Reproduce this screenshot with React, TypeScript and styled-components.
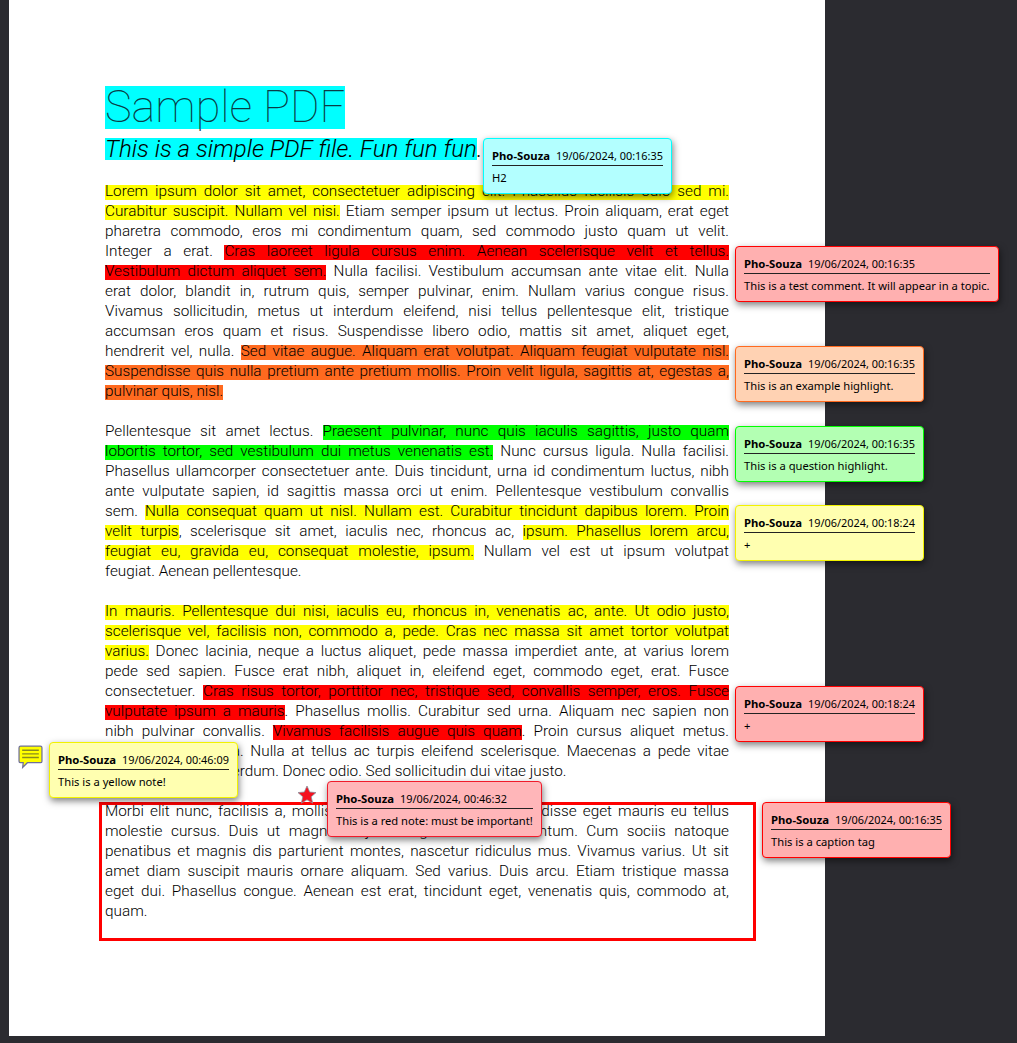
import React, { FC, ReactNode } from 'react';
import styled, { createGlobalStyle } from 'styled-components';

type Tone = 'cyan' | 'red' | 'pink' | 'orange' | 'green' | 'yellow';
type Mark = 'yellow' | 'red' | 'orange' | 'green';

const toneColors: Record<Tone, { bg: string; border: string }> = {
  cyan: { bg: '#b3ffff', border: '#00ffff' },
  red: { bg: '#ffb0b0', border: '#ff0000' },
  pink: { bg: '#ffb6b9', border: '#f01b2b' },
  orange: { bg: '#ffd2b3', border: '#ff6a1f' },
  green: { bg: '#b3ffb3', border: '#00ff00' },
  yellow: { bg: '#ffffb0', border: '#f2f200' },
};

const markColors: Record<Mark, string> = {
  yellow: '#ffff00',
  red: '#ff0000',
  orange: '#ff6a1f',
  green: '#00ff00',
};

const comments: { x: number; y: number; tone: Tone; date: string; text: string }[] = [
  { x: 483, y: 138, tone: 'cyan', date: '19/06/2024, 00:16:35', text: 'H2' },
  { x: 735, y: 246, tone: 'red', date: '19/06/2024, 00:16:35', text: 'This is a test comment. It will appear in a topic.' },
  { x: 735, y: 346, tone: 'orange', date: '19/06/2024, 00:16:35', text: 'This is an example highlight.' },
  { x: 735, y: 426, tone: 'green', date: '19/06/2024, 00:16:35', text: 'This is a question highlight.' },
  { x: 735, y: 505, tone: 'yellow', date: '19/06/2024, 00:18:24', text: '+' },
  { x: 735, y: 686, tone: 'red', date: '19/06/2024, 00:18:24', text: '+' },
  { x: 49, y: 742, tone: 'yellow', date: '19/06/2024, 00:46:09', text: 'This is a yellow note!' },
  { x: 327, y: 781, tone: 'pink', date: '19/06/2024, 00:46:32', text: 'This is a red note: must be important!' },
  { x: 762, y: 802, tone: 'red', date: '19/06/2024, 00:16:35', text: 'This is a caption tag' },
];

const App: FC = () => (
  <>
    <GlobalStyle />
    <Viewer>
      <Sheet>
        <Title>Sample PDF</Title>
        <Subtitle>
          <SubtitleMark>This is a simple PDF file. Fun fun fun</SubtitleMark>.
        </Subtitle>

        <Paragraph>
          <Row>
            <M c="yellow">Lorem ipsum dolor sit amet, consectetuer adipiscing elit. Phasellus facilisis odio sed mi.</M>
          </Row>
          <Row>
            <M c="yellow">Curabitur suscipit. Nullam vel nisi.</M> Etiam semper ipsum ut lectus. Proin aliquam, erat eget
          </Row>
          <Row>pharetra commodo, eros mi condimentum quam, sed commodo justo quam ut velit.</Row>
          <Row>
            Integer a erat. <M c="red">Cras laoreet ligula cursus enim. Aenean scelerisque velit et tellus.</M>
          </Row>
          <Row>
            <M c="red">Vestibulum dictum aliquet sem.</M> Nulla facilisi. Vestibulum accumsan ante vitae elit. Nulla
          </Row>
          <Row>erat dolor, blandit in, rutrum quis, semper pulvinar, enim. Nullam varius congue risus.</Row>
          <Row>Vivamus sollicitudin, metus ut interdum eleifend, nisi tellus pellentesque elit, tristique</Row>
          <Row>accumsan eros quam et risus. Suspendisse libero odio, mattis sit amet, aliquet eget,</Row>
          <Row>
            hendrerit vel, nulla. <M c="orange">Sed vitae augue. Aliquam erat volutpat. Aliquam feugiat vulputate nisl.</M>
          </Row>
          <Row>
            <M c="orange">Suspendisse quis nulla pretium ante pretium mollis. Proin velit ligula, sagittis at, egestas a,</M>
          </Row>
          <LastRow>
            <M c="orange">pulvinar quis, nisl.</M>
          </LastRow>
        </Paragraph>

        <Paragraph>
          <Row>
            Pellentesque sit amet lectus. <M c="green">Praesent pulvinar, nunc quis iaculis sagittis, justo quam</M>
          </Row>
          <Row>
            <M c="green">lobortis tortor, sed vestibulum dui metus venenatis est.</M> Nunc cursus ligula. Nulla facilisi.
          </Row>
          <Row>Phasellus ullamcorper consectetuer ante. Duis tincidunt, urna id condimentum luctus, nibh</Row>
          <Row>ante vulputate sapien, id sagittis massa orci ut enim. Pellentesque vestibulum convallis</Row>
          <Row>
            sem. <M c="yellow">Nulla consequat quam ut nisl. Nullam est. Curabitur tincidunt dapibus lorem. Proin</M>
          </Row>
          <Row>
            <M c="yellow">velit turpis</M>, scelerisque sit amet, iaculis nec, rhoncus ac, <M c="yellow">ipsum. Phasellus lorem arcu,</M>
          </Row>
          <Row>
            <M c="yellow">feugiat eu, gravida eu, consequat molestie, ipsum.</M> Nullam vel est ut ipsum volutpat
          </Row>
          <LastRow>feugiat. Aenean pellentesque.</LastRow>
        </Paragraph>

        <Paragraph>
          <Row>
            <M c="yellow">In mauris. Pellentesque dui nisi, iaculis eu, rhoncus in, venenatis ac, ante. Ut odio justo,</M>
          </Row>
          <Row>
            <M c="yellow">scelerisque vel, facilisis non, commodo a, pede. Cras nec massa sit amet tortor volutpat</M>
          </Row>
          <Row>
            <M c="yellow">varius.</M> Donec lacinia, neque a luctus aliquet, pede massa imperdiet ante, at varius lorem
          </Row>
          <Row>pede sed sapien. Fusce erat nibh, aliquet in, eleifend eget, commodo eget, erat. Fusce</Row>
          <Row>
            consectetuer. <M c="red">Cras risus tortor, porttitor nec, tristique sed, convallis semper, eros. Fusce</M>
          </Row>
          <Row>
            <M c="red">vulputate ipsum a mauris</M>. Phasellus mollis. Curabitur sed urna. Aliquam nec sapien non
          </Row>
          <Row>
            nibh pulvinar convallis. <M c="red">Vivamus facilisis augue quis quam</M>. Proin cursus aliquet metus.
          </Row>
          <Row>Suspendisse lacinia. Nulla at tellus ac turpis eleifend scelerisque. Maecenas a pede vitae</Row>
          <LastRow>enim commodo interdum. Donec odio. Sed sollicitudin dui vitae justo.</LastRow>
        </Paragraph>

        <CaptionParagraph>
          <Row>Morbi elit nunc, facilisis a, mollis a, molestie at, lectus. Suspendisse eget mauris eu tellus</Row>
          <Row>molestie cursus. Duis ut magna at justo dignissim condimentum. Cum sociis natoque</Row>
          <Row>penatibus et magnis dis parturient montes, nascetur ridiculus mus. Vivamus varius. Ut sit</Row>
          <Row>amet diam suscipit mauris ornare aliquam. Sed varius. Duis arcu. Etiam tristique massa</Row>
          <Row>eget dui. Phasellus congue. Aenean est erat, tincidunt eget, venenatis quis, commodo at,</Row>
          <LastRow>quam.</LastRow>
          <CaptionBox />
        </CaptionParagraph>
      </Sheet>

      <NoteIcon viewBox="0 0 24 23">
        <path
          d="M2.500 1h19a1.500 1.500 0 0 1 1.500 1.500v13a1.500 1.500 0 0 1-1.500 1.500H9l-4.500 4.500.5-4.500H2.500A1.500 1.500 0 0 1 1 15.500v-13A1.500 1.500 0 0 1 2.500 1z"
          fill="#ffff00"
          stroke="#6f6f9a"
          strokeWidth="1.200"
        />
        <path d="M4 5h16M4 8.500h16M4 12h16" stroke="#8a8a1e" strokeWidth="1.300" />
      </NoteIcon>
      <StarIcon viewBox="0 0 20 20">
        <path
          d="M10 1l2.700 6 6.300.6-4.800 4.200 1.500 6.400L10 14.800l-5.700 3.400 1.500-6.400L1 7.600 7.300 7z"
          fill="#f5111f"
          stroke="#8a8f9a"
          strokeWidth="0.800"
        />
      </StarIcon>

      {comments.map((c, i) => (
        <Comment key={i} $x={c.x} $y={c.y} $tone={c.tone}>
          <CommentHead>
            <Author>Pho-Souza</Author>
            <span>{c.date}</span>
          </CommentHead>
          <CommentBody>{c.text}</CommentBody>
        </Comment>
      ))}
    </Viewer>
  </>
);

export default App;

const M: FC<{ c: Mark; children: ReactNode }> = ({ c, children }) => <Hl $bg={markColors[c]}>{children}</Hl>;

const GlobalStyle = createGlobalStyle`
  html, body {
    margin: 0;
    padding: 0;
    background: #2b2b30;
  }
`;

const Viewer = styled.div`
  position: relative;
  width: 1017px;
  height: 1043px;
  overflow: hidden;
  background: #2b2b30;
  padding-left: 9px;
  box-sizing: border-box;
`;

const Sheet = styled.main`
  width: 816px;
  height: 1036px;
  box-sizing: border-box;
  padding: 86px 96px 0;
  background: #fff;
  color: #000;
  font-family: Roboto, 'Liberation Sans', Arial, sans-serif;
  font-weight: 300;
  font-size: 15.3px;
  line-height: 20px;
`;

const Hl = styled.span<{ $bg: string }>`
  background: linear-gradient(${(p) => p.$bg}, ${(p) => p.$bg}) 0 100% / 100% 15px no-repeat;
`;

const Title = styled.h1`
  display: block;
  width: fit-content;
  margin: 0;
  height: 43px;
  background: #00ffff;
  font-family: Roboto, 'Liberation Sans', sans-serif;
  font-weight: 100;
  font-size: 45px;
  line-height: 41px;
  color: #0a3c46;
  white-space: nowrap;
`;

const Subtitle = styled.h2`
  margin: 9px 0 20px;
  height: 23px;
  font-weight: 300;
  font-style: italic;
  font-size: 24.100px;
  line-height: 22px;
  white-space: nowrap;
`;

const SubtitleMark = styled.span`
  display: inline-block;
  height: 22px;
  background: #00ffff;
`;

const Paragraph = styled.p`
  margin: 0 0 20px;
`;

const CaptionParagraph = styled(Paragraph)`
  position: relative;
`;

const Row = styled.span`
  display: block;
  text-align: justify;
  text-align-last: justify;
  white-space: nowrap;
`;

const LastRow = styled(Row)`
  text-align: left;
  text-align-last: left;
`;

const CaptionBox = styled.div`
  position: absolute;
  left: -6px;
  right: -27px;
  top: 1px;
  height: 139px;
  box-sizing: border-box;
  border: 3px solid #ff0000;
`;

const NoteIcon = styled.svg`
  position: absolute;
  left: 18px;
  top: 745px;
  width: 25px;
  height: 24px;
`;

const StarIcon = styled.svg`
  position: absolute;
  left: 297px;
  top: 785px;
  width: 20px;
  height: 20px;
`;

const Comment = styled.aside<{ $x: number; $y: number; $tone: Tone }>`
  position: absolute;
  left: ${(p) => p.$x}px;
  top: ${(p) => p.$y}px;
  box-sizing: border-box;
  min-width: 189px;
  min-height: 56px;
  padding: 9px 8px 6px 8px;
  border: 1.500px solid ${(p) => toneColors[p.$tone].border};
  border-radius: 4px;
  background: ${(p) => toneColors[p.$tone].bg};
  box-shadow: 1px 3px 7px rgba(0, 0, 0, 0.5);
  color: #000;
  font-family: 'Noto Sans', 'Open Sans', sans-serif;
  font-size: 11.200px;
  font-weight: 400;
  line-height: 15px;
`;

const CommentHead = styled.div`
  display: flex;
  gap: 6px;
  padding-bottom: 2px;
  border-bottom: 1px solid #222;
  font-size: 10.900px;
  white-space: nowrap;
`;

const Author = styled.strong`
  font-size: 11.300px;
  font-weight: 700;
`;

const CommentBody = styled.div`
  margin-top: 4px;
  white-space: nowrap;
`;
